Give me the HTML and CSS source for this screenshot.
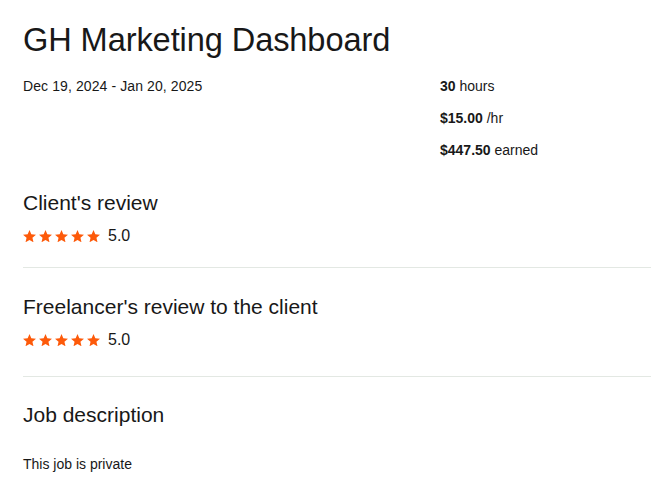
FILE: index.html
```html
<!DOCTYPE html>
<html>
<head>
<meta charset="utf-8">
<link rel="stylesheet" href="styles.css">
</head>
<body>
<main class="page">
  <h1 class="title">GH Marketing Dashboard</h1>
  <div class="meta">
    <div class="dates">Dec 19, 2024 - Jan 20, 2025</div>
    <ul class="stats">
      <li><strong>30</strong> hours</li>
      <li><strong>$15.00</strong> /hr</li>
      <li><strong>$447.50</strong> earned</li>
    </ul>
  </div>
  <section class="review review-client">
    <h2 class="heading">Client's review</h2>
    <div class="rating">
      <span class="stars">
        <svg viewBox="2 2 20 19.3"><path d="M12 17.27L18.18 21l-1.64-7.03L22 9.24l-7.19-.61L12 2 9.19 8.63 2 9.24l5.46 4.73L5.82 21z"/></svg>
        <svg viewBox="2 2 20 19.3"><path d="M12 17.27L18.18 21l-1.64-7.03L22 9.24l-7.19-.61L12 2 9.19 8.63 2 9.24l5.46 4.73L5.82 21z"/></svg>
        <svg viewBox="2 2 20 19.3"><path d="M12 17.27L18.18 21l-1.64-7.03L22 9.24l-7.19-.61L12 2 9.19 8.63 2 9.24l5.46 4.73L5.82 21z"/></svg>
        <svg viewBox="2 2 20 19.3"><path d="M12 17.27L18.18 21l-1.64-7.03L22 9.24l-7.19-.61L12 2 9.19 8.63 2 9.24l5.46 4.73L5.82 21z"/></svg>
        <svg viewBox="2 2 20 19.3"><path d="M12 17.27L18.18 21l-1.64-7.03L22 9.24l-7.19-.61L12 2 9.19 8.63 2 9.24l5.46 4.73L5.82 21z"/></svg>
      </span>
      <span class="score">5.0</span>
    </div>
  </section>
  <section class="review review-freelancer">
    <h2 class="heading">Freelancer's review to the client</h2>
    <div class="rating">
      <span class="stars">
        <svg viewBox="2 2 20 19.3"><path d="M12 17.27L18.18 21l-1.64-7.03L22 9.24l-7.19-.61L12 2 9.19 8.63 2 9.24l5.46 4.73L5.82 21z"/></svg>
        <svg viewBox="2 2 20 19.3"><path d="M12 17.27L18.18 21l-1.64-7.03L22 9.24l-7.19-.61L12 2 9.19 8.63 2 9.24l5.46 4.73L5.82 21z"/></svg>
        <svg viewBox="2 2 20 19.3"><path d="M12 17.27L18.18 21l-1.64-7.03L22 9.24l-7.19-.61L12 2 9.19 8.63 2 9.24l5.46 4.73L5.82 21z"/></svg>
        <svg viewBox="2 2 20 19.3"><path d="M12 17.27L18.18 21l-1.64-7.03L22 9.24l-7.19-.61L12 2 9.19 8.63 2 9.24l5.46 4.73L5.82 21z"/></svg>
        <svg viewBox="2 2 20 19.3"><path d="M12 17.27L18.18 21l-1.64-7.03L22 9.24l-7.19-.61L12 2 9.19 8.63 2 9.24l5.46 4.73L5.82 21z"/></svg>
      </span>
      <span class="score">5.0</span>
    </div>
  </section>
  <section class="description">
    <h2 class="heading">Job description</h2>
    <p class="private">This job is private</p>
  </section>
</main>
</body>
</html>
```
FILE: styles.css
```css
* { box-sizing: border-box; }
html, body { margin: 0; padding: 0; background: #fff; }
body {
  font-family: "Liberation Sans", Arial, sans-serif;
  color: #181818;
}
.page { padding: 20px 0 0 23px; }
.title {
  margin: 0;
  font-size: 32.6px;
  line-height: 40px;
  font-weight: 400;
  letter-spacing: -0.1px;
}
.meta {
  display: grid;
  grid-template-columns: 417px 1fr;
  margin-top: 16px;
  margin-bottom: 5px;
}
.dates { font-size: 14px; line-height: 20px; letter-spacing: 0.1px; }
.stats {
  list-style: none;
  margin: 0;
  padding: 0;
  display: flex;
  flex-direction: column;
  gap: 12px;
  font-size: 14px;
  line-height: 20px;
}
.stats strong { font-weight: 700; }
.review {
  border-bottom: 1px solid #e3e8e3;
  padding: 24px 0 19px;
}
.review-freelancer { padding: 25px 0 24px; }
.heading {
  margin: 0;
  font-size: 21px;
  line-height: 28px;
  font-weight: 400;
}
.rating {
  display: flex;
  align-items: center;
  gap: 8px;
  margin-top: 7px;
  height: 24px;
}
.stars { display: flex; gap: 3px; }
.stars svg { width: 13px; height: 12.5px; fill: #fd5a0a; display: block; }
.score { font-size: 16px; line-height: 24px; }
.description { padding-top: 24px; }
.private { margin: 25px 0 0; font-size: 14px; line-height: 20px; }
```
